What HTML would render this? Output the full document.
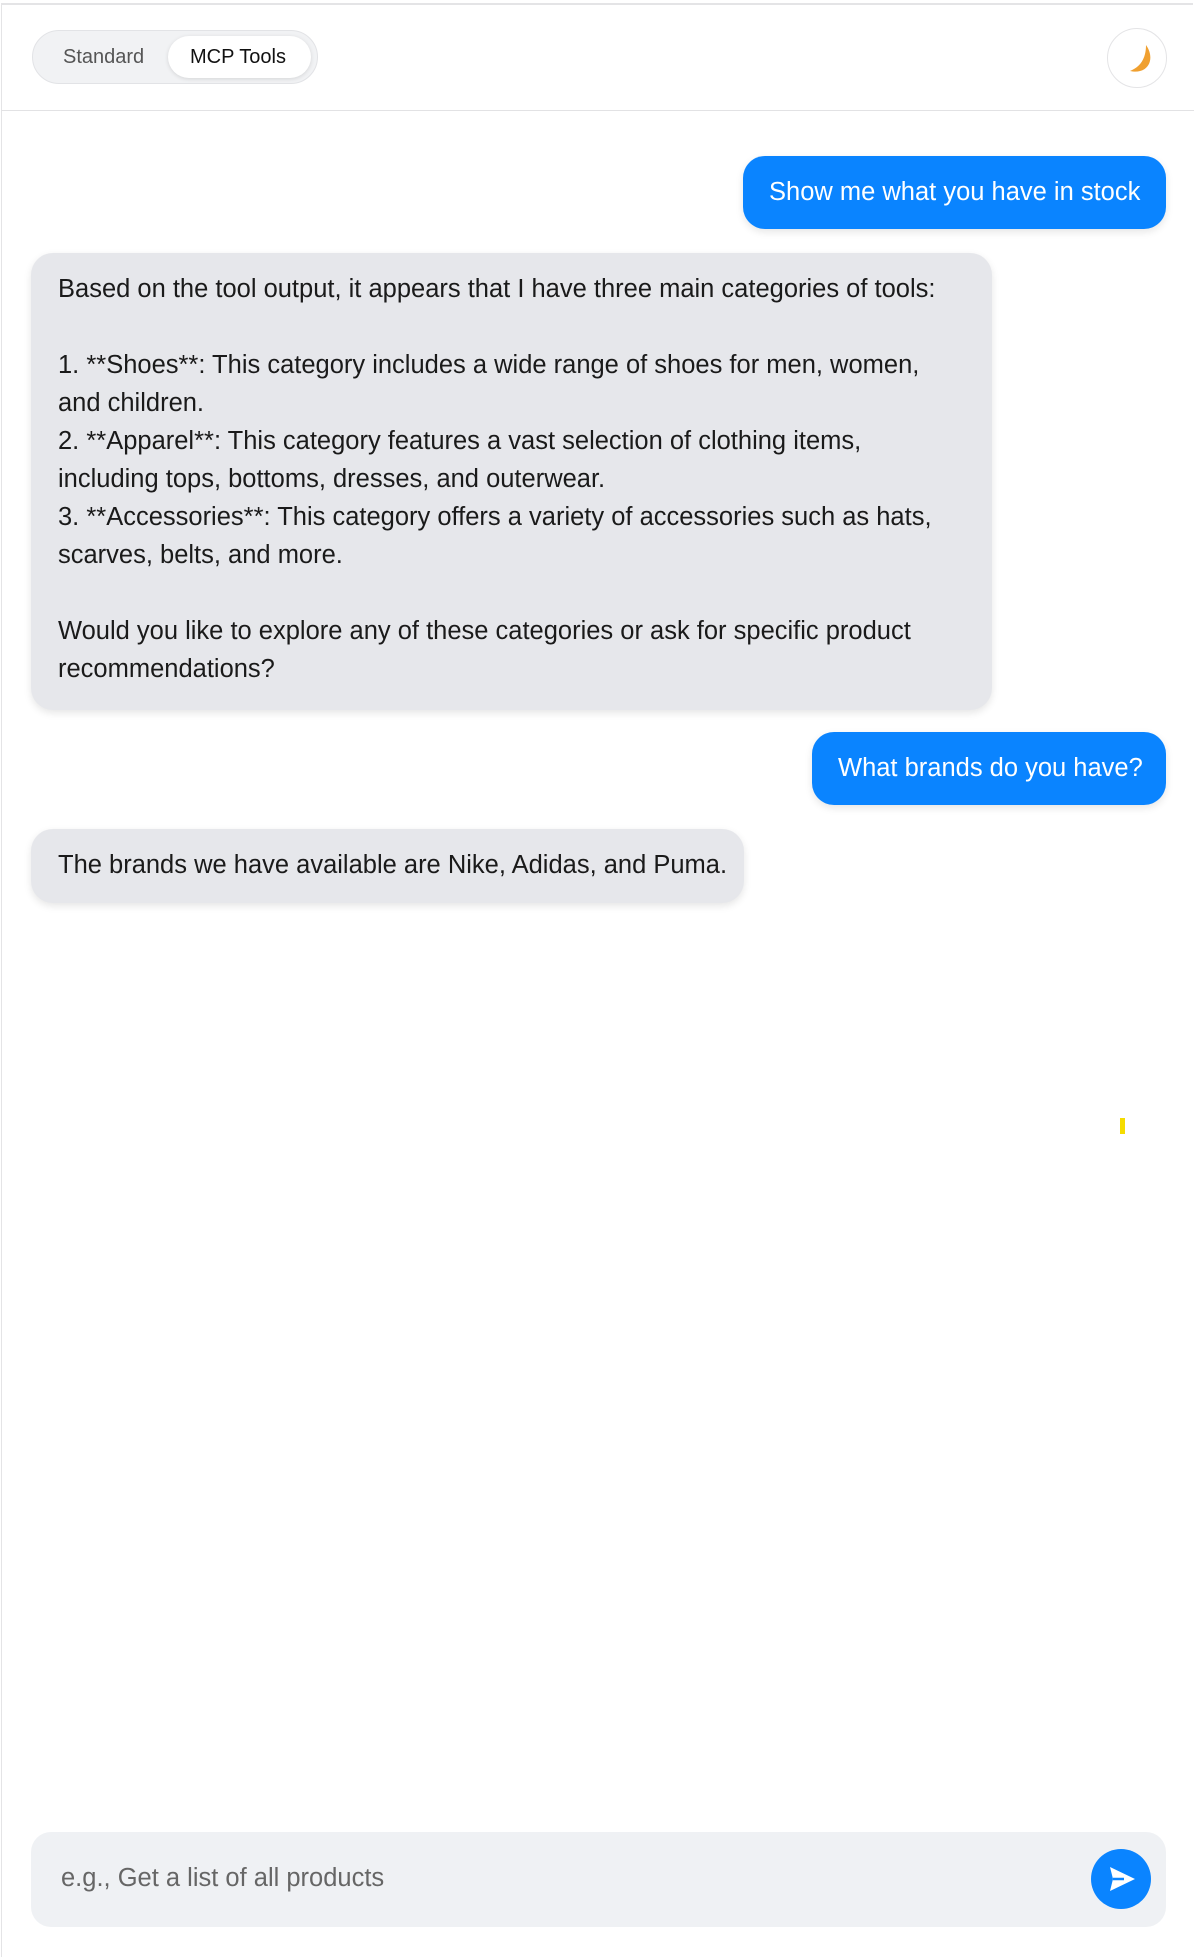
<!DOCTYPE html>
<html><head><meta charset="utf-8"><style>
*{box-sizing:border-box;margin:0;padding:0}
body{width:1194px;height:1957px;background:#fff;font-family:"Liberation Sans",sans-serif;position:relative;overflow:hidden;color:#1a1a1a}
.frame{position:absolute;left:1px;top:3px;width:1192px;height:1954px;border-top:2px solid #e4e4e6;border-left:1px solid #e4e4e6}
.hdr{position:absolute;left:1px;top:5px;width:1193px;height:106px;border-bottom:1px solid #e2e2e4}
.tog{position:absolute;left:31px;top:25px;width:286px;height:54px;border-radius:27px;background:#f1f2f4;border:1px solid #e2e3e6}
.tog span{position:absolute;font-size:20px;top:15px}
.on{position:absolute;left:135px;top:5px;width:143px;height:42px;border-radius:21px;background:#fff;box-shadow:0 1px 4px rgba(0,0,0,.12)}
.moon{position:absolute;left:1106px;top:23px;width:60px;height:60px;border-radius:50%;border:1px solid #e4e4e6;background:#fff}
.b{position:absolute;font-size:25.5px;line-height:38px;border-radius:22px;box-shadow:0 3px 8px rgba(0,0,0,.1)}
.u{background:#0a84ff;color:#fff;padding:17px 26px;text-align:right;white-space:nowrap}
.a{background:#e6e7eb;color:#1a1a1a;padding:17px 27px}
.inp{position:absolute;left:31px;top:1832px;width:1135px;height:95px;border-radius:20px;background:#eff1f4}
.inp span{position:absolute;left:30px;top:32px;font-size:25.5px;color:#666}
.send{position:absolute;left:1060px;top:17px;width:60px;height:60px;border-radius:50%;background:#0a84ff}
</style></head><body>
<div class="frame"></div>
<div class="hdr">
 <div class="tog"><div class="on"></div><span style="left:30px;color:#555">Standard</span><span style="left:157px;color:#111">MCP Tools</span></div>
 <div class="moon"><svg width="60" height="60" viewBox="0 0 60 60"><path d="M38 16 C48 30 40 46 22 42 C32 38 38 30 38 16Z" fill="#f0a030"/></svg></div>
</div>
<div class="b u" style="left:743px;top:156px;width:423px;height:73px">Show me what you have in stock</div>
<div class="b a" style="left:31px;top:253px;width:961px;height:457px">Based on the tool output, it appears that I have three main categories of tools:<br><br>1. **Shoes**: This category includes a wide range of shoes for men, women, and children.<br>2. **Apparel**: This category features a vast selection of clothing items, including tops, bottoms, dresses, and outerwear.<br>3. **Accessories**: This category offers a variety of accessories such as hats, scarves, belts, and more.<br><br>Would you like to explore any of these categories or ask for specific product recommendations?</div>
<div class="b u" style="left:812px;top:732px;width:354px;height:73px">What brands do you have?</div>
<div class="b a" style="left:31px;top:829px;width:713px;height:74px;white-space:nowrap">The brands we have available are Nike, Adidas, and Puma.</div>
<div style="position:absolute;left:1120px;top:1118px;width:5px;height:16px;background:#f5dc00"></div>
<div class="inp"><span>e.g., Get a list of all products</span><div class="send"><svg width="60" height="60" viewBox="0 0 60 60"><path d="M19 18 L44 30 L19 42 L22 30Z" fill="#fff"/><path d="M22 30 H33" stroke="#0a84ff" stroke-width="2.5"/></svg></div></div>
</body></html>
